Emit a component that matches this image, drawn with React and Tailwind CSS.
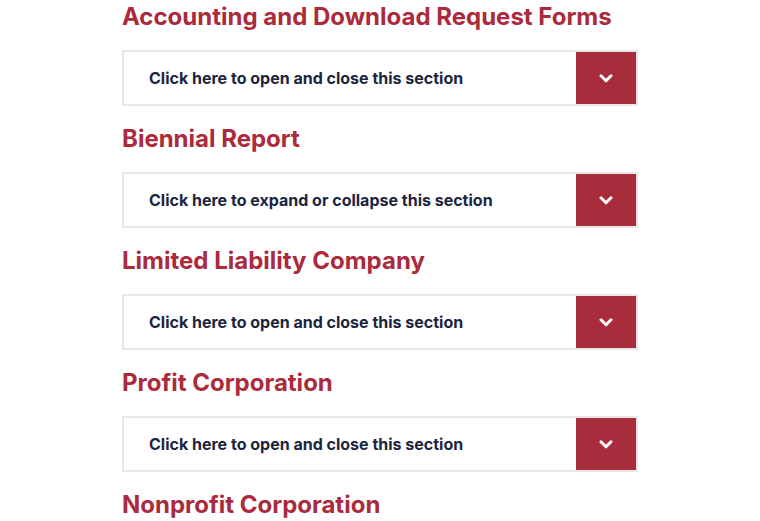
const sections = [
  { title: 'Accounting and Download Request Forms', label: 'Click here to open and close this section' },
  { title: 'Biennial Report', label: 'Click here to expand or collapse this section' },
  { title: 'Limited Liability Company', label: 'Click here to open and close this section' },
  { title: 'Profit Corporation', label: 'Click here to open and close this section' },
  { title: 'Nonprofit Corporation', label: 'Click here to open and close this section' },
];

const Chevron = () => (
  <svg width="14" height="9" viewBox="0 0 14 9" fill="none">
    <path d="M2 1.8 L7 6.8 L12 1.8" stroke="white" strokeWidth="3" strokeLinecap="round" strokeLinejoin="round" />
  </svg>
);

export default function App() {
  return (
    <div className="min-h-screen bg-white pt-[3px]" style={{ fontFamily: 'Inter, "Noto Sans", sans-serif' }}>
      <div className="mx-auto w-[516px]">
        {sections.map((s) => (
          <section key={s.title}>
            <h2 className="mb-[19px] text-[24px] font-bold leading-[28px] text-[#ab2a3b]">
              {s.title}
            </h2>
            <button className="mb-[19px] flex h-[56px] w-full items-stretch border-2 border-[#e7e7e7] bg-white text-left">
              <span className="flex flex-1 items-center pl-[25px] text-[16px] font-bold text-[#1b2540]">
                {s.label}
              </span>
              <span className="flex w-[60px] items-center justify-center bg-[#a92c3c]">
                <Chevron />
              </span>
            </button>
          </section>
        ))}
      </div>
    </div>
  );
}
